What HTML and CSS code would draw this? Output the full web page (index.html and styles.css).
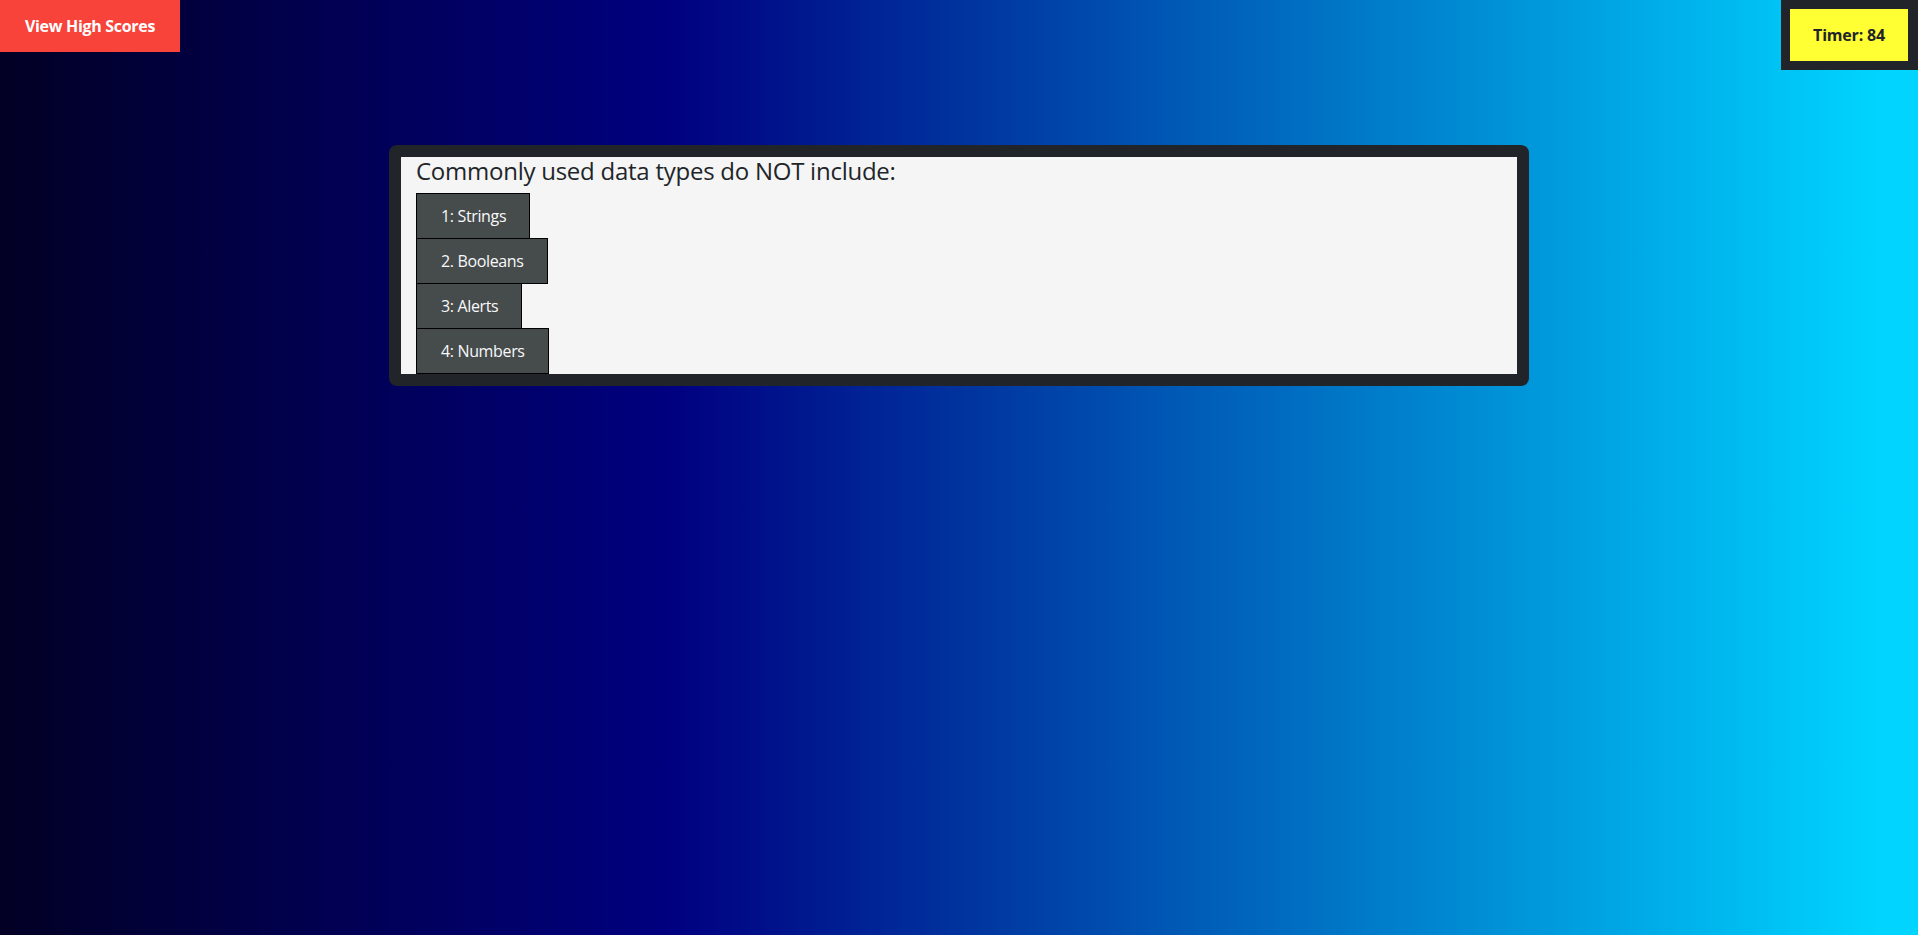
FILE: index.html
```html
<!DOCTYPE html>
<html lang="en">
<head>
<meta charset="utf-8">
<title>Code Quiz</title>
<link rel="stylesheet" href="styles.css">
</head>
<body>
<header class="topbar">
  <button class="scores-btn">View High Scores</button>
  <div class="timer-box"><div class="timer">Timer: 84</div></div>
</header>
<main class="quiz-card">
  <div class="quiz-inner">
    <h4 class="question">Commonly used data types do NOT include:</h4>
    <div class="answers">
      <button class="answer">1: Strings</button>
      <button class="answer">2. Booleans</button>
      <button class="answer">3: Alerts</button>
      <button class="answer">4: Numbers</button>
    </div>
  </div>
</main>
</body>
</html>
```
FILE: styles.css
```css
html, body {
  margin: 0;
  min-height: 100%;
}
body {
  min-height: 935px;
  font-family: "Open Sans", "Noto Sans", sans-serif;
  font-size: 16px;
  line-height: 1.5;
  color: #212529;
  background: linear-gradient(90deg, rgb(2, 0, 36) 0%, rgb(0, 0, 128) 35%, rgb(0, 212, 255) 98%);
}
.topbar {
  display: flex;
  justify-content: space-between;
  align-items: flex-start;
}
.scores-btn {
  width: 180px;
  height: 52px;
  border: 0;
  margin: 0;
  padding: 0;
  background: #f8433a;
  color: #fff;
  font-family: inherit;
  font-weight: 700;
  font-size: 16px;
  letter-spacing: -0.3px;
}
.timer-box {
  background: #212529;
  padding: 9px 10px 9px 9px;
}
.timer {
  width: 118px;
  height: 52px;
  background: #ffff33;
  display: flex;
  align-items: center;
  justify-content: center;
  font-weight: 700;
  font-size: 16px;
  letter-spacing: -0.2px;
  color: #212529;
}
.quiz-card {
  width: 1140px;
  box-sizing: border-box;
  margin: 75px auto 0;
  padding: 12px;
  background: #212529;
  border-radius: 8px;
}
.quiz-inner {
  background: #f5f5f5;
  padding: 0 15px;
}
.question {
  margin: 0 0 8px;
  font-size: 24px;
  font-weight: 500;
  line-height: 28px;
  letter-spacing: -0.25px;
  color: #212529;
}
.answers {
  display: flex;
  flex-direction: column;
  align-items: flex-start;
}
.answer {
  margin: -1px 0 0;
  padding: 10px 23px 10px 24px;
  border: 1px solid #000;
  border-radius: 0;
  background: #464b4b;
  color: #f8f9fa;
  font-family: inherit;
  font-size: 16px;
  line-height: 24px;
  letter-spacing: -0.35px;
}
.answer:first-child {
  margin-top: 0;
}
```
